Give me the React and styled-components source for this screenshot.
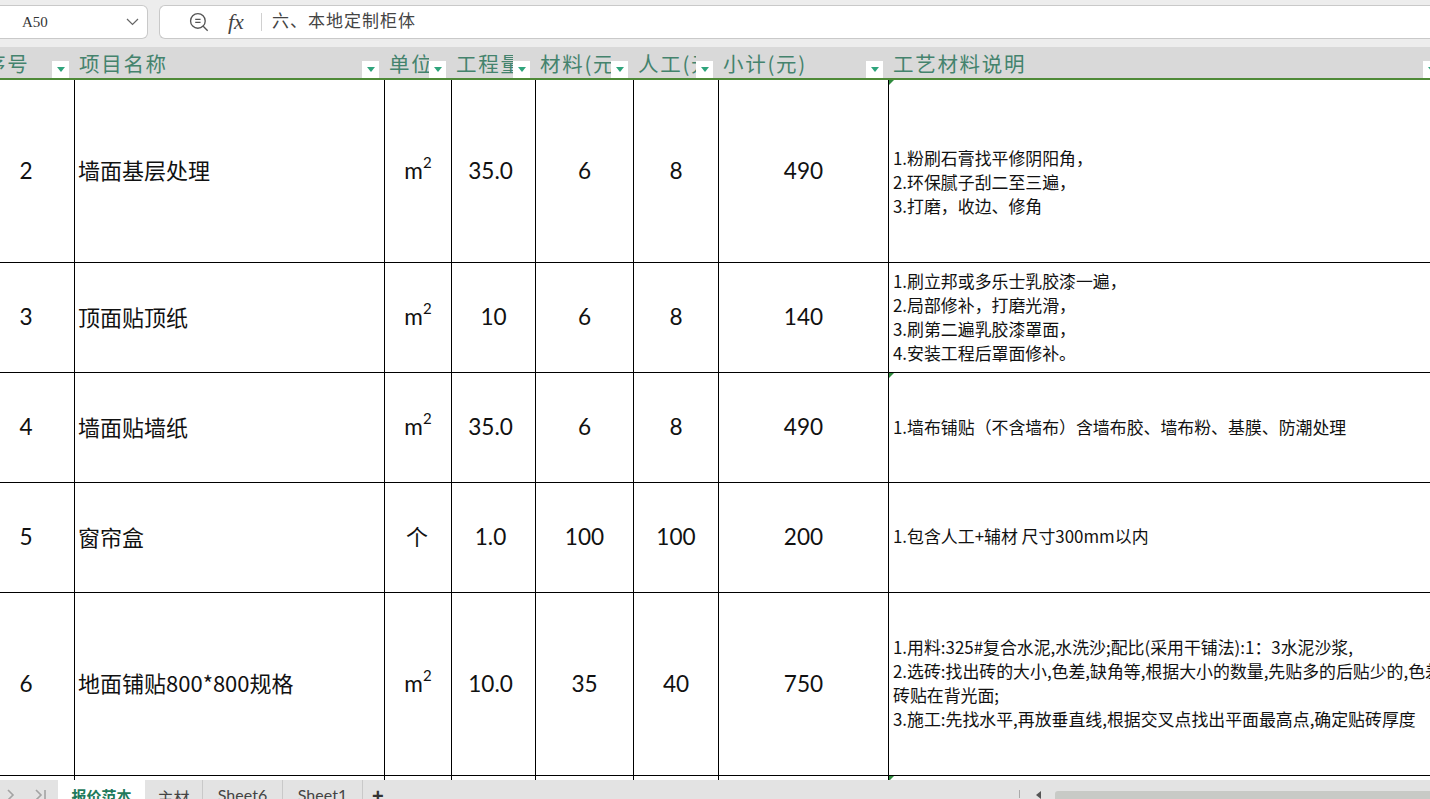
import styled, { createGlobalStyle } from 'styled-components';

const GlobalStyle = createGlobalStyle`
  html, body {
    margin: 0;
    padding: 0;
    height: 799px;
    overflow: hidden;
    background: #fff;
    font-family: Lato, "Noto Sans CJK SC", sans-serif;
  }
`;

const COLUMNS = '97px 310px 67px 84px 98px 85px 170px 564px';

const Page = styled.div`
  display: flex;
  flex-direction: column;
  width: 1430px;
  height: 799px;
  overflow: hidden;
`;

const FormulaBar = styled.div`
  display: flex;
  align-items: flex-start;
  gap: 11px;
  height: 47px;
  padding-top: 5px;
  box-sizing: border-box;
  background: #ededed;
  flex: none;
`;

const NameBox = styled.div`
  display: flex;
  align-items: center;
  justify-content: space-between;
  box-sizing: border-box;
  width: 149px;
  height: 34px;
  margin-left: -1px;
  padding: 0 8px 0 23px;
  background: #fff;
  border: 1px solid #c9c9c9;
  border-left: 0;
  border-radius: 0 6px 6px 0;
  font-family: "Liberation Serif", "Noto Sans CJK SC", serif;
  font-size: 15px;
  color: #333;
`;

const FormulaBox = styled.div`
  display: flex;
  align-items: center;
  flex: 1;
  height: 34px;
  box-sizing: border-box;
  padding-left: 29px;
  background: #fff;
  border: 1px solid #c9c9c9;
  border-right: 0;
  border-radius: 6px 0 0 6px;
`;

const FxLabel = styled.span`
  width: 33px;
  margin-left: 19px;
  font-family: "Liberation Serif", serif;
  font-style: italic;
  font-size: 22px;
  color: #444;
`;

const FormulaText = styled.span`
  display: flex;
  height: 18px;
  padding-left: 10px;
  border-left: 1px solid #d0d0d0;
  font-family: "Noto Sans CJK SC", sans-serif;
  font-size: 17px;
  letter-spacing: 1px;
  color: #444;
  line-height: 14px;
`;

const Sheet = styled.div`
  flex: 1;
  min-height: 0;
  overflow: hidden;
`;

const HeaderRow = styled.div`
  display: grid;
  grid-template-columns: ${COLUMNS};
  height: 33px;
  margin-left: -22px;
  background: #d9d9d9;
  border-bottom: 2px solid #4f8a38;
  box-sizing: border-box;
`;

const HeaderCell = styled.div`
  position: relative;
  min-width: 0;
`;

// the label stops where the filter button starts, as a clipped cell does
const HeaderLabel = styled.div`
  margin-left: ${(p) => p.$pad ?? 4}px;
  margin-right: ${(p) => (p.$right ?? 6) + 17}px;
  overflow: hidden;
  font-family: "Noto Sans CJK SC", sans-serif;
  font-size: 20.5px;
  line-height: 33px;
  letter-spacing: 1.7px;
  white-space: nowrap;
  color: #44836d;
`;

const FilterButton = styled.span`
  position: absolute;
  top: 14px;
  right: ${(p) => p.$right ?? 6}px;
  display: flex;
  align-items: center;
  justify-content: center;
  width: 17px;
  height: 17px;
  background: #fff;

  &::after {
    content: "";
    border-left: 4px solid transparent;
    border-right: 4px solid transparent;
    border-top: 5px solid #2fa47c;
  }
`;

const Row = styled.div`
  display: grid;
  grid-template-columns: ${COLUMNS};
  height: ${(p) => p.$height}px;
  margin-left: -22px;
  box-sizing: border-box;
  border-bottom: ${(p) => (p.$open ? 0 : '1px solid #000')};
`;

const Cell = styled.div`
  position: relative;
  display: flex;
  align-items: center;
  justify-content: ${(p) => (p.$left ? 'flex-start' : 'center')};
  box-sizing: border-box;
  min-width: 0;
  padding-left: ${(p) => (p.$left ? 4 : 0)}px;
  padding-right: ${(p) => p.$nudge ?? 0}px;
  padding-bottom: ${(p) => (p.$left ? 0 : 2)}px;
  border-right: ${(p) => (p.$last ? 0 : '1px solid #000')};
  font-family: Lato, "Noto Sans CJK SC", sans-serif;
  font-size: 22.6px;
  color: #111;
`;

const Title = styled.span`
  position: relative;
  top: -2px;
  left: -1px;
  font-family: "Noto Sans CJK SC", Lato, sans-serif;
  font-size: 22px;
  white-space: nowrap;
`;

const Sup = styled.sup`
  font-size: 15px;
  line-height: 0;
  position: relative;
  top: -2px;
`;

const Notes = styled.div`
  position: relative;
  top: ${(p) => p.$shift ?? 0}px;
  font-family: "Noto Sans CJK SC", Lato, sans-serif;
  font-size: 16.9px;
  line-height: 24px;
  white-space: nowrap;
  color: #111;
`;

const Corner = styled.span`
  position: absolute;
  top: 0;
  left: 0;
  border-top: 5px solid #2e8b3d;
  border-right: 5px solid transparent;
`;

const TabBar = styled.div`
  display: flex;
  align-items: flex-start;
  height: 19px;
  flex: none;
  background: #e3e3e3;
  overflow: hidden;
`;

const NavArrows = styled.div`
  display: flex;
  align-items: center;
  gap: 15px;
  width: 58px;
  box-sizing: border-box;
  padding: 9px 0 0 6px;
`;

const Tab = styled.div`
  display: flex;
  justify-content: center;
  box-sizing: border-box;
  width: ${(p) => p.$width}px;
  height: 19px;
  padding-top: 5px;
  background: ${(p) => (p.$active ? '#fff' : 'transparent')};
  border-right: ${(p) => (p.$active ? 0 : '1px solid #c9c9c9')};
  font-family: ${(p) => (p.$active ? '"Noto Sans CJK SC"' : 'Lato, "Noto Sans CJK SC"')}, sans-serif;
  font-size: ${(p) => (p.$active ? 15 : 16)}px;
  font-weight: ${(p) => (p.$active ? 700 : 400)};
  color: ${(p) => (p.$active ? '#1f7a5c' : '#444')};
  white-space: nowrap;
`;

const AddTab = styled.span`
  margin: 6px 0 0 9px;
  font-family: "Liberation Sans", sans-serif;
  font-size: 20px;
  font-weight: 700;
  line-height: 20px;
  color: #333;
`;

const ScrollArea = styled.div`
  display: flex;
  align-items: flex-start;
  flex: 1;
  min-width: 0;
  margin-left: 635px;
  padding-top: 11px;
`;

const Divider = styled.span`
  width: 1px;
  height: 8px;
  margin-top: -1px;
  background: #aaa;
`;

const ScrollLeft = styled.span`
  margin: 0 0 0 16px;
  border-top: 4px solid transparent;
  border-bottom: 4px solid transparent;
  border-right: 5px solid #555;
`;

const ScrollThumb = styled.span`
  flex: 1;
  height: 8px;
  margin-left: 14px;
  border-radius: 3px 0 0 0;
  background: #c8cac6;
`;

const headers = [
  { text: '序号', pad: 7 },
  { text: '项目名称' },
  { text: '单位' },
  { text: '工程量' },
  { text: '材料(元)' },
  { text: '人工(元)' },
  { text: '小计(元)' },
  { text: '工艺材料说明', right: 13 },
];

const rows = [
  {
    no: 2, name: '墙面基层处理', unit: 'm2', qty: '35.0', mat: 6, lab: 8, sum: 490, height: 183, shift: 11, corner: true,
    notes: ['1.粉刷石膏找平修阴阳角，', '2.环保腻子刮二至三遍，', '3.打磨，收边、修角'],
  },
  {
    no: 3, name: '顶面贴顶纸', unit: 'm2', qty: '10', mat: 6, lab: 8, sum: 140, height: 110, shift: -1,
    notes: ['1.刷立邦或多乐士乳胶漆一遍，', '2.局部修补，打磨光滑，', '3.刷第二遍乳胶漆罩面，', '4.安装工程后罩面修补。'],
  },
  {
    no: 4, name: '墙面贴墙纸', unit: 'm2', qty: '35.0', mat: 6, lab: 8, sum: 490, height: 110, shift: -1, corner: true,
    notes: ['1.墙布铺贴（不含墙布）含墙布胶、墙布粉、基膜、防潮处理'],
  },
  {
    no: 5, name: '窗帘盒', unit: '个', qty: '1.0', mat: 100, lab: 100, sum: 200, height: 110, shift: -2,
    notes: ['1.包含人工+辅材 尺寸300mm以内'],
  },
  {
    no: 6, name: '地面铺贴800*800规格', unit: 'm2', qty: '10.0', mat: 35, lab: 40, sum: 750, height: 183, shift: -1,
    notes: [
      '1.用料:325#复合水泥,水洗沙;配比(采用干铺法):1：3水泥沙浆,',
      '2.选砖:找出砖的大小,色差,缺角等,根据大小的数量,先贴多的后贴少的,色差大的',
      '砖贴在背光面;',
      '3.施工:先找水平,再放垂直线,根据交叉点找出平面最高点,确定贴砖厚度',
    ],
  },
];

function SearchMinusIcon() {
  return (
    <svg width="20" height="20" viewBox="0 0 18 18" fill="none" stroke="#555" strokeWidth="1.2">
      <circle cx="8" cy="8" r="6.6" />
      <path d="M5.6 6.7h4.8M5.6 9.3h4.8M12.8 12.8l4 4" />
    </svg>
  );
}

function Chevron() {
  return (
    <svg width="13" height="8" viewBox="0 0 13 8" fill="none" stroke="#666" strokeWidth="1.2">
      <path d="M1 1l5.5 5.5L12 1" />
    </svg>
  );
}

function NavIcon({ end }) {
  return (
    <svg width="13" height="12" viewBox="0 0 13 12" fill="none" stroke="#a3a3a3" strokeWidth="1.6">
      <path d="M2 1l5 5-5 5" />
      {end && <path d="M11 1v10" />}
    </svg>
  );
}

function App() {
  return (
    <Page>
      <GlobalStyle />
      <FormulaBar>
        <NameBox>
          A50
          <Chevron />
        </NameBox>
        <FormulaBox>
          <SearchMinusIcon />
          <FxLabel>fx</FxLabel>
          <FormulaText>六、本地定制柜体</FormulaText>
        </FormulaBox>
      </FormulaBar>

      <Sheet>
        <HeaderRow>
          {headers.map((h) => (
            <HeaderCell key={h.text}>
              <HeaderLabel $pad={h.pad} $right={h.right}>{h.text}</HeaderLabel>
              <FilterButton $right={h.right} />
            </HeaderCell>
          ))}
        </HeaderRow>
        {rows.map((row) => (
          <Row key={row.no} $height={row.height}>
            <Cell>{row.no}</Cell>
            <Cell $left><Title>{row.name}</Title></Cell>
            <Cell>
              {row.unit === 'm2' ? <span>m<Sup>2</Sup></span> : <Title>{row.unit}</Title>}
            </Cell>
            <Cell $nudge={row.qty.includes('.') ? 6 : 0}>{row.qty}</Cell>
            <Cell>{row.mat}</Cell>
            <Cell>{row.lab}</Cell>
            <Cell>{row.sum}</Cell>
            <Cell $left $last>
              {row.corner && <Corner />}
              <Notes $shift={row.shift}>
                {row.notes.map((line) => (
                  <div key={line}>{line}</div>
                ))}
              </Notes>
            </Cell>
          </Row>
        ))}
        <Row $height={6} $open>
          <Cell /><Cell /><Cell /><Cell /><Cell /><Cell /><Cell />
          <Cell $left $last><Corner /></Cell>
        </Row>
      </Sheet>

      <TabBar>
        <NavArrows>
          <NavIcon />
          <NavIcon end />
        </NavArrows>
        <Tab $active $width={87}>报价范本</Tab>
        <Tab $width={58}>主材</Tab>
        <Tab $width={80}>Sheet6</Tab>
        <Tab $width={80}>Sheet1</Tab>
        <AddTab>+</AddTab>
        <ScrollArea>
          <Divider />
          <ScrollLeft />
          <ScrollThumb />
        </ScrollArea>
      </TabBar>
    </Page>
  );
}

export default App;
